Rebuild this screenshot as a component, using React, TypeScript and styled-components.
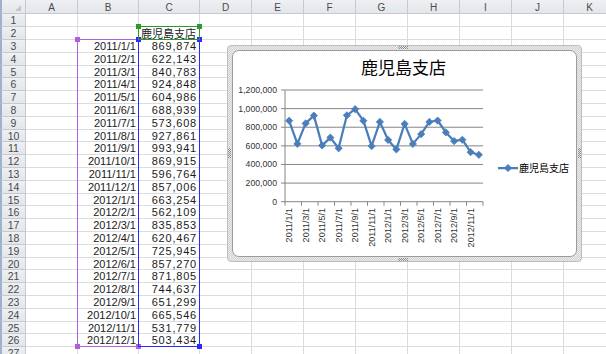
import React from 'react';
import styled, { createGlobalStyle } from 'styled-components';

const GlobalStyle = createGlobalStyle`
	html, body {
		margin: 0;
		padding: 0;
		background: #ffffff;
		overflow: hidden;
	}
	body {
		font-family: 'Liberation Sans', Arial, sans-serif;
	}
`;

const COLUMNS = ['A', 'B', 'C', 'D', 'E', 'F', 'G', 'H', 'I', 'J', 'K'];
const COL_WIDTHS = [52, 61, 61, 52, 52, 52, 52, 52, 52, 52, 52];
const ROW_COUNT = 27;

const DATA: [string, number][] = [
	['2011/1/1', 869874],
	['2011/2/1', 622143],
	['2011/3/1', 840783],
	['2011/4/1', 924848],
	['2011/5/1', 604986],
	['2011/6/1', 688939],
	['2011/7/1', 573608],
	['2011/8/1', 927861],
	['2011/9/1', 993941],
	['2011/10/1', 869915],
	['2011/11/1', 596764],
	['2011/12/1', 857006],
	['2012/1/1', 663254],
	['2012/2/1', 562109],
	['2012/3/1', 835853],
	['2012/4/1', 620467],
	['2012/5/1', 725945],
	['2012/6/1', 857270],
	['2012/7/1', 871805],
	['2012/8/1', 744637],
	['2012/9/1', 651299],
	['2012/10/1', 665546],
	['2012/11/1', 531779],
	['2012/12/1', 503434],
];

const TITLE = '鹿児島支店';

// rows are 12.8px on screen, rounded so that gridlines stay crisp
const rowHeights = Array.from(
	{ length: ROW_COUNT },
	(_, i) => Math.round(14.4 + 12.8 * (i + 1)) - Math.round(14.4 + 12.8 * i)
);

const fmt = (n: number) => n.toLocaleString('en-US');

const App: React.FC = () => {
	const cells: React.ReactNode[] = [];
	cells.push(
		<Corner key="corner">
			<CornerMark />
		</Corner>
	);
	COLUMNS.forEach((c) => cells.push(<ColHeader key={c}>{c}</ColHeader>));
	for (let r = 1; r <= ROW_COUNT; r++) {
		cells.push(<RowHeader key={`r${r}`}>{r}</RowHeader>);
		COLUMNS.forEach((c) => {
			let content: React.ReactNode = null;
			let align: 'left' | 'right' = 'right';
			let kind: 'date' | 'num' | 'text' = 'text';
			if (r === 2 && c === 'C') {
				content = TITLE;
				align = 'left';
			}
			const row = DATA[r - 3];
			if (row && c === 'B') {
				content = row[0];
				kind = 'date';
			}
			if (row && c === 'C') {
				content = fmt(row[1]);
				kind = 'num';
			}
			cells.push(
				<Cell key={`${c}${r}`} $align={align} $kind={kind}>
					{content}
				</Cell>
			);
		});
	}

	return (
		<>
			<GlobalStyle />
			<Sheet>
				<Grid $rows={`14px ${rowHeights.map((h) => `${h}px`).join(' ')}`}>{cells}</Grid>

				<RangeBox $color="#b060dc" style={{ left: 77, top: 39, width: 62, height: 308 }}>
					<Handle $color="#b060dc" $pos="tl" />
					<Handle $color="#b060dc" $pos="bl" />
					<Handle $color="#b060dc" $pos="br" />
				</RangeBox>
				<RangeBox $color="#2a2aff" style={{ left: 138, top: 39, width: 62, height: 308 }}>
					<Handle $color="#2a2aff" $pos="tl" />
					<Handle $color="#2a2aff" $pos="tr" />
					<Handle $color="#2a2aff" $pos="br" />
				</RangeBox>
				<RangeBox $color="#2a9a2a" style={{ left: 138, top: 26, width: 62, height: 14 }}>
					<Handle $color="#2a9a2a" $pos="tl" />
					<Handle $color="#2a9a2a" $pos="tr" />
				</RangeBox>

				<ChartFrame>
					<Grip $side="top" />
					<Grip $side="bottom" />
					<Grip $side="left" />
					<Grip $side="right" />
					<ChartPanel>
						<LineChart />
					</ChartPanel>
				</ChartFrame>
			</Sheet>
		</>
	);
};

const PLOT = { left: 285, right: 483, top: 90, bottom: 201.7, max: 1200000 };
const SERIES = '#4a7ebb';

const LineChart: React.FC = () => {
	const step = (PLOT.right - PLOT.left) / DATA.length;
	const xAt = (i: number) => PLOT.left + step * (i + 0.5);
	const yAt = (v: number) => PLOT.bottom - (v / PLOT.max) * (PLOT.bottom - PLOT.top);
	const ticks = [0, 200000, 400000, 600000, 800000, 1000000, 1200000];
	const points = DATA.map(([, v], i) => `${xAt(i).toFixed(1)},${yAt(v).toFixed(1)}`).join(' ');
	const diamond = (x: number, y: number, r = 3.6) =>
		`${x},${y - r} ${x + r},${y} ${x},${y + r} ${x - r},${y}`;

	return (
		<ChartSvg viewBox="233 51 343 205" width={343} height={205}>
			<text x={403.5} y={74} textAnchor="middle" fontSize={17} fill="#000" className="title">
				{TITLE}
			</text>

			{ticks.map((t) => (
				<g key={t}>
					{t > 0 && (
						<line x1={PLOT.left} x2={PLOT.right} y1={yAt(t)} y2={yAt(t)} stroke="#868686" strokeWidth={1} />
					)}
					<line x1={PLOT.left - 4} x2={PLOT.left} y1={yAt(t)} y2={yAt(t)} stroke="#868686" strokeWidth={1} />
					<text x={277} y={yAt(t) + 3} textAnchor="end" fontSize={8.7} fill="#333">
						{fmt(t)}
					</text>
				</g>
			))}

			<line x1={PLOT.left} x2={PLOT.left} y1={PLOT.top} y2={PLOT.bottom + 0.5} stroke="#868686" />
			<line x1={PLOT.left} x2={PLOT.right} y1={PLOT.bottom} y2={PLOT.bottom} stroke="#868686" />
			{Array.from({ length: DATA.length / 2 + 1 }, (_, k) => {
				const x = PLOT.left + step * 2 * k;
				return <line key={k} x1={x} x2={x} y1={PLOT.bottom} y2={PLOT.bottom + 4} stroke="#868686" />;
			})}

			{DATA.filter((_, i) => i % 2 === 0).map(([label], k) => {
				const x = xAt(k * 2) + 3;
				return (
					<text
						key={label}
						x={x}
						y={208}
						transform={`rotate(-90 ${x} 208)`}
						textAnchor="end"
						fontSize={9}
						fill="#333"
					>
						{label}
					</text>
				);
			})}

			<polyline points={points} fill="none" stroke={SERIES} strokeWidth={2.25} strokeLinejoin="round" />
			{DATA.map(([, v], i) => (
				<polygon key={i} points={diamond(xAt(i), yAt(v))} fill={SERIES} stroke={SERIES} strokeWidth={0.8} />
			))}

			<line x1={498} x2={518} y1={168} y2={168} stroke={SERIES} strokeWidth={2.25} />
			<polygon points={diamond(508, 168)} fill={SERIES} stroke={SERIES} strokeWidth={0.8} />
			<text x={519} y={171.5} fontSize={10} fill="#000" className="title">
				{TITLE}
			</text>
		</ChartSvg>
	);
};

const Sheet = styled.div`
	position: relative;
	width: 606px;
	height: 354px;
	overflow: hidden;
	background: #ffffff;
`;

const Grid = styled.div<{ $rows: string }>`
	display: grid;
	grid-template-columns: 26px ${COL_WIDTHS.map((w) => `${w}px`).join(' ')};
	grid-template-rows: ${(p) => p.$rows};
	width: max-content;
`;

const HeaderBase = styled.div`
	box-sizing: border-box;
	background: linear-gradient(#eef0f3, #e3e6ea);
	color: #4a4a4a;
	font-size: 10px;
	display: flex;
	align-items: center;
	justify-content: center;
	border-right: 1px solid #c6cad0;
	border-bottom: 1px solid #c6cad0;
	overflow: hidden;
`;

const Corner = styled(HeaderBase)`
	position: relative;
	border-left: 2px solid #9fb2cc;
`;

const CornerMark = styled.div`
	position: absolute;
	right: 4px;
	bottom: 2px;
	width: 0;
	height: 0;
	border-left: 6px solid transparent;
	border-bottom: 6px solid #c2c6cc;
`;

const ColHeader = styled(HeaderBase)`
	padding-top: 1px;
`;

const RowHeader = styled(HeaderBase)`
	border-left: 2px solid #9fb2cc;
	font-size: 10.5px;
`;

const Cell = styled.div<{ $align: 'left' | 'right'; $kind: 'date' | 'num' | 'text' }>`
	box-sizing: border-box;
	border-right: 1px solid #dadcdf;
	border-bottom: 1px solid #dadcdf;
	display: flex;
	align-items: center;
	justify-content: ${(p) => (p.$align === 'left' ? 'flex-start' : 'flex-end')};
	padding: 0 2px 0 2px;
	font-size: 11px;
	color: #1a1a1a;
	white-space: nowrap;
	overflow: visible;
	letter-spacing: ${(p) => (p.$kind === 'num' ? '0.8px' : '0')};
	font-family: ${(p) =>
		p.$kind === 'text'
			? "'Noto Sans CJK JP', sans-serif"
			: "'Liberation Sans', Arial, sans-serif"};
	position: relative;
	z-index: 1;
`;

const RangeBox = styled.div<{ $color: string }>`
	position: absolute;
	box-sizing: border-box;
	border: 1px solid ${(p) => p.$color};
	pointer-events: none;
	z-index: 2;
`;

const Handle = styled.span<{ $color: string; $pos: 'tl' | 'tr' | 'bl' | 'br' }>`
	position: absolute;
	width: 5px;
	height: 5px;
	background: ${(p) => p.$color};
	${(p) => (p.$pos[0] === 't' ? 'top: -3px;' : 'bottom: -3px;')}
	${(p) => (p.$pos[1] === 'l' ? 'left: -3px;' : 'right: -3px;')}
`;

const ChartFrame = styled.div`
	position: absolute;
	left: 227px;
	top: 45px;
	width: 355px;
	height: 217px;
	box-sizing: border-box;
	padding: 4px;
	border: 1px solid #bdbdbd;
	border-radius: 4px;
	background: repeating-conic-gradient(#d2d2d2 0 25%, #ececec 0 50%) 0 0 / 2px 2px;
	z-index: 3;
`;

const Grip = styled.span<{ $side: 'top' | 'bottom' | 'left' | 'right' }>`
	position: absolute;
	background: repeating-conic-gradient(#8a8a8a 0 25%, transparent 0 50%) 0 0 / 2px 2px;
	${(p) =>
		p.$side === 'top' || p.$side === 'bottom'
			? `left: 170px; width: 10px; height: 3px; ${p.$side}: 0;`
			: `top: 102px; width: 3px; height: 10px; ${p.$side}: 0;`}
`;

const ChartPanel = styled.div`
	box-sizing: border-box;
	width: 345px;
	height: 207px;
	background: #ffffff;
	border: 1px solid #9c9c9c;
	border-radius: 7px;
	overflow: hidden;
`;

const ChartSvg = styled.svg`
	display: block;
	font-family: 'Liberation Sans', Arial, sans-serif;

	.title {
		font-family: 'Noto Sans CJK JP', sans-serif;
	}
`;

export default App;
